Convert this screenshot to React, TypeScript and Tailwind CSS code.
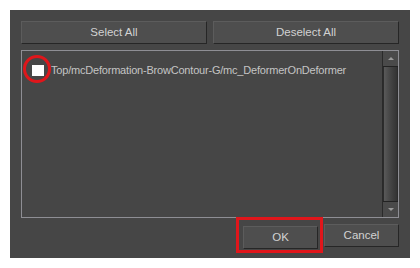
const font = { fontFamily: '"Liberation Sans", Arial, sans-serif' };

function DlgButton({ label, className = '' }: { label: string; className?: string }) {
  return (
    <button
      className={`h-[23px] bg-[#4e4e4e] border border-t-[#5c5c5c] border-l-[#5c5c5c] border-r-[#262626] border-b-[#262626] text-[11.5px] text-[#d2d2d2] ${className}`}
    >
      {label}
    </button>
  );
}

export default function App() {
  return (
    <div className="w-[420px] h-[268px] bg-white pt-[10px] pl-[10px]" style={font}>
      <div className="relative w-[400px] h-[248px] bg-[#464646] px-[11px] pt-[11px] flex flex-col">
        {/* TOP BUTTONS */}
        <div className="flex gap-[6px]">
          <DlgButton label="Select All" className="flex-1" />
          <DlgButton label="Deselect All" className="flex-1" />
        </div>

        {/* LIST */}
        <div className="mt-[6px] h-[168px] border border-[#8e8e94] flex">
          <div className="flex-1 min-w-0 pl-[10px] pt-[12px]">
            <div className="flex items-center gap-[7px] relative">
              <div className="w-[12px] h-[11px] bg-white shrink-0" />
              <span className="text-[11px] tracking-[-0.2px] text-[#c4c4c4] leading-[14px] whitespace-nowrap">
                Top/mcDeformation-BrowContour-G/mc_DeformerOnDeformer
              </span>
              {/* highlight ring */}
              <div className="absolute left-[-9px] top-[-8px] w-[28px] h-[28px] rounded-full border-[3px] border-[#e0161b]" />
            </div>
          </div>

          {/* SCROLLBAR */}
          <div className="w-[16px] flex flex-col border-l border-[#2a2a2a]">
            <div className="h-[16px] bg-[#4a4a4a] border-b border-[#222] flex items-center justify-center">
              <div className="w-0 h-0 border-l-[3px] border-r-[3px] border-b-[3px] border-l-transparent border-r-transparent border-b-[#9a9a9a]" />
            </div>
            <div className="flex-1 bg-gradient-to-r from-[#5a5a5a] via-[#444] to-[#333] border-x border-[#2c2c2c]" />
            <div className="h-[16px] bg-[#4a4a4a] border-t border-[#222] flex items-center justify-center">
              <div className="w-0 h-0 border-l-[3px] border-r-[3px] border-t-[3px] border-l-transparent border-r-transparent border-t-[#9a9a9a]" />
            </div>
          </div>
        </div>

        {/* BOTTOM BUTTONS */}
        <div className="mt-[6px] flex justify-end gap-[6px]">
          <div className="relative">
            <DlgButton label="OK" className="w-[75px]" />
            <div className="absolute left-[-7px] top-[-7px] w-[87px] h-[36px] border-[3px] border-[#e0161b]" />
          </div>
          <DlgButton label="Cancel" className="w-[75px]" />
        </div>
      </div>
    </div>
  );
}
